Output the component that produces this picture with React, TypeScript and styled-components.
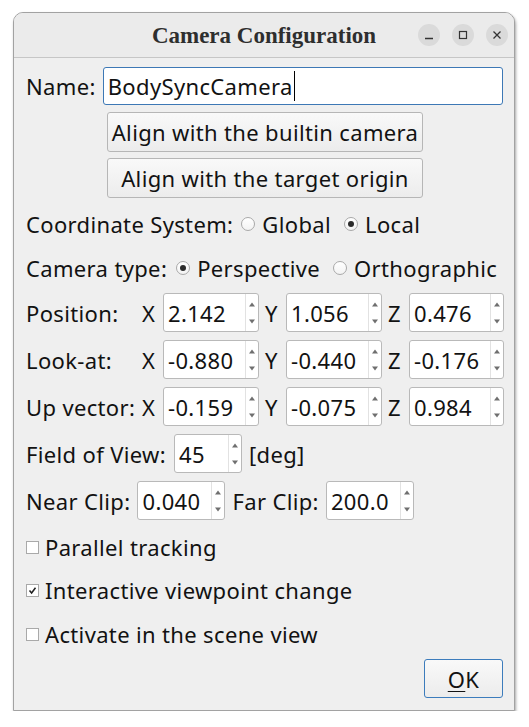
import React from "react";
import styled, { createGlobalStyle } from "styled-components";

const GlobalStyle = createGlobalStyle`
  html, body {
    margin: 0;
    padding: 0;
    background: #ffffff;
  }
  body {
    font-family: "Noto Sans", "Open Sans", sans-serif;
    color: #121212;
  }
  * { box-sizing: border-box; }
`;

const Window = styled.div`
  margin: 12px 0 0 13px;
  width: 502px;
  height: 699px;
  border: 1px solid #a2a2a2;
  border-radius: 10px 10px 0 0;
  background: #efefef;
  box-shadow: 1px 2px 3px rgba(0, 0, 0, 0.35);
  overflow: hidden;
  display: flex;
  flex-direction: column;
`;

const TitleBar = styled.div`
  height: 45px;
  flex: none;
  background: #ebebeb;
  border-bottom: 1px solid #c6c6c6;
  display: grid;
  grid-template-columns: 1fr auto 1fr;
  align-items: center;
`;

const Title = styled.div`
  grid-column: 2;
  font-family: "Liberation Serif", "DejaVu Serif", serif;
  font-weight: bold;
  font-size: 23px;
  color: #2e2e2e;
  padding-top: 1px;
`;

const Controls = styled.div`
  grid-column: 3;
  justify-self: end;
  display: flex;
  gap: 12px;
  padding-right: 6px;
`;

const CircleButton = styled.div`
  width: 22px;
  height: 22px;
  border-radius: 50%;
  background: #dadada;
  display: flex;
  align-items: center;
  justify-content: center;
`;

const Body = styled.div`
  flex: 1;
  display: flex;
  flex-direction: column;
  padding: 9px 11px 0 12px;
  font-size: 22px;
  letter-spacing: 0.35px;
  line-height: 1;
`;

const Row = styled.div<{ $h: number; $gap: number }>`
  display: flex;
  align-items: center;
  height: ${(p) => p.$h}px;
  margin-top: ${(p) => p.$gap}px;
  flex: none;
`;

const Label = styled.span<{ $w?: number; $mr?: number; $ml?: number }>`
  white-space: nowrap;
  ${(p) => (p.$w ? `width: ${p.$w}px; flex: none;` : "")}
  margin-right: ${(p) => p.$mr ?? 0}px;
  margin-left: ${(p) => p.$ml ?? 0}px;
`;

const TextField = styled.div`
  flex: 1;
  height: 100%;
  margin-left: 7px;
  background: #ffffff;
  border: 1px solid #3d78b5;
  border-radius: 3px;
  display: flex;
  align-items: center;
  padding-left: 4px;
`;

const Caret = styled.span`
  display: inline-block;
  width: 1px;
  height: 30px;
  background: #000;
  margin-left: 1px;
`;

const PushButton = styled.div<{ $primary?: boolean }>`
  height: 100%;
  border: 1px solid ${(p) => (p.$primary ? "#3c7cbc" : "#b6b6b6")};
  border-radius: 3px;
  background: linear-gradient(#f9f9f9, #ececec);
  display: flex;
  align-items: center;
  justify-content: center;
  white-space: nowrap;
`;

const WideButton = styled(PushButton)`
  width: 316px;
  margin-left: 81px;
`;

const OkButton = styled(PushButton)`
  width: 79px;
  margin-left: auto;
`;

const Mnemonic = styled.span`
  text-decoration: underline;
  text-underline-offset: 3px;
  text-decoration-thickness: 1px;
`;

const RadioGroup = styled.div<{ $ml: number }>`
  display: flex;
  align-items: center;
  margin-left: ${(p) => p.$ml}px;
  gap: 13px;
`;

const Option = styled.div`
  display: flex;
  align-items: center;
  gap: 7px;
  white-space: nowrap;
`;

const RadioDot = styled.span<{ $on?: boolean }>`
  width: 14px;
  height: 14px;
  border-radius: 50%;
  border: 1px solid #a9a9a9;
  background: linear-gradient(#ffffff, #f3f3f3);
  display: flex;
  align-items: center;
  justify-content: center;
  flex: none;
  &::after {
    content: "";
    display: ${(p) => (p.$on ? "block" : "none")};
    width: 6px;
    height: 6px;
    border-radius: 50%;
    background: #2b2b2b;
  }
`;

const CheckOption = styled.div`
  display: flex;
  align-items: center;
  white-space: nowrap;
`;

const CheckBoxBox = styled.span`
  width: 13px;
  height: 13px;
  border: 1px solid #a9a9a9;
  background: #ffffff;
  display: flex;
  align-items: center;
  justify-content: center;
  flex: none;
  margin-right: 6px;
`;

const SpinField = styled.div<{ $w: number }>`
  width: ${(p) => p.$w}px;
  height: 100%;
  flex: none;
  background: #ffffff;
  border: 1px solid #b9b9b9;
  border-radius: 3px;
  display: flex;
  align-items: stretch;
`;

const SpinValue = styled.div`
  flex: 1;
  display: flex;
  align-items: center;
  padding-left: 4px;
  overflow: hidden;
`;

const SpinArrows = styled.div`
  width: 13px;
  flex: none;
  border-left: 1px solid #e2e2e2;
  display: flex;
  align-items: center;
  justify-content: center;
`;

const AxisGrid = styled.div`
  display: flex;
  align-items: center;
  height: 100%;
`;

const Axis = styled.span<{ $ml: number }>`
  width: 15px;
  flex: none;
  margin-left: ${(p) => p.$ml}px;
  margin-right: 6px;
`;

const Spin = ({ value, width }: { value: string; width: number }) => (
  <SpinField $w={width}>
    <SpinValue>{value}</SpinValue>
    <SpinArrows>
      <svg width="8" height="26" viewBox="0 0 8 26">
        <path d="M1 6.5 L4 2.5 L7 6.5 Z" fill="#6f6f6f" />
        <path d="M1 19.5 L4 23.5 L7 19.5 Z" fill="#6f6f6f" />
      </svg>
    </SpinArrows>
  </SpinField>
);

const CheckBox = ({ checked, label }: { checked?: boolean; label: string }) => (
  <CheckOption>
    <CheckBoxBox>
      {checked && (
        <svg width="9" height="9" viewBox="0 0 9 9">
          <path d="M1.5 4.6 L3.6 7 L7.5 1.8" stroke="#1e1e1e" strokeWidth="1.5" fill="none" />
        </svg>
      )}
    </CheckBoxBox>
    {label}
  </CheckOption>
);

const vectors: { label: string; values: [string, string, string] }[] = [
  { label: "Position:", values: ["2.142", "1.056", "0.476"] },
  { label: "Look-at:", values: ["-0.880", "-0.440", "-0.176"] },
  { label: "Up vector:", values: ["-0.159", "-0.075", "0.984"] },
];

export default function App() {
  return (
    <>
      <GlobalStyle />
      <Window>
        <TitleBar>
          <Title>Camera Configuration</Title>
          <Controls>
            <CircleButton>
              <svg width="10" height="10" viewBox="0 0 10 10">
                <path d="M1 8.5 H9" stroke="#333" strokeWidth="1.3" />
              </svg>
            </CircleButton>
            <CircleButton>
              <svg width="10" height="10" viewBox="0 0 10 10">
                <rect x="1.5" y="1.5" width="7" height="7" stroke="#333" strokeWidth="1.2" fill="none" />
              </svg>
            </CircleButton>
            <CircleButton>
              <svg width="10" height="10" viewBox="0 0 10 10">
                <path d="M1.5 1.5 L8.5 8.5 M8.5 1.5 L1.5 8.5" stroke="#333" strokeWidth="1.3" />
              </svg>
            </CircleButton>
          </Controls>
        </TitleBar>

        <Body>
          <Row $h={38} $gap={0}>
            <Label>Name:</Label>
            <TextField>
              BodySyncCamera
              <Caret />
            </TextField>
          </Row>

          <Row $h={40} $gap={7}>
            <WideButton>Align with the builtin camera</WideButton>
          </Row>
          <Row $h={40} $gap={6}>
            <WideButton>Align with the target origin</WideButton>
          </Row>

          <Row $h={40} $gap={6}>
            <Label>Coordinate System:</Label>
            <RadioGroup $ml={8}>
              <Option>
                <RadioDot />
                Global
              </Option>
              <Option>
                <RadioDot $on />
                Local
              </Option>
            </RadioGroup>
          </Row>

          <Row $h={40} $gap={4}>
            <Label>Camera type:</Label>
            <RadioGroup $ml={9}>
              <Option>
                <RadioDot $on />
                Perspective
              </Option>
              <Option>
                <RadioDot />
                Orthographic
              </Option>
            </RadioGroup>
          </Row>

          {vectors.map((v, i) => (
            <Row key={v.label} $h={39} $gap={i === 0 ? 5 : 8}>
              <Label $w={116}>{v.label}</Label>
              <AxisGrid>
                <Axis $ml={0}>X</Axis>
                <Spin value={v.values[0]} width={96} />
                <Axis $ml={6}>Y</Axis>
                <Spin value={v.values[1]} width={96} />
                <Axis $ml={6}>Z</Axis>
                <Spin value={v.values[2]} width={95} />
              </AxisGrid>
            </Row>
          ))}

          <Row $h={39} $gap={8}>
            <Label $mr={8}>Field of View:</Label>
            <Spin value="45" width={68} />
            <Label $ml={7}>[deg]</Label>
          </Row>

          <Row $h={39} $gap={8}>
            <Label $mr={7}>Near Clip:</Label>
            <Spin value="0.040" width={88} />
            <Label $ml={7} $mr={7}>
              Far Clip:
            </Label>
            <Spin value="200.0" width={88} />
          </Row>

          <Row $h={40} $gap={7}>
            <CheckBox label="Parallel tracking" />
          </Row>
          <Row $h={40} $gap={3}>
            <CheckBox checked label="Interactive viewpoint change" />
          </Row>
          <Row $h={40} $gap={4}>
            <CheckBox label="Activate in the scene view" />
          </Row>

          <Row $h={39} $gap={5}>
            <OkButton $primary>
              <Mnemonic>O</Mnemonic>K
            </OkButton>
          </Row>
        </Body>
      </Window>
    </>
  );
}
